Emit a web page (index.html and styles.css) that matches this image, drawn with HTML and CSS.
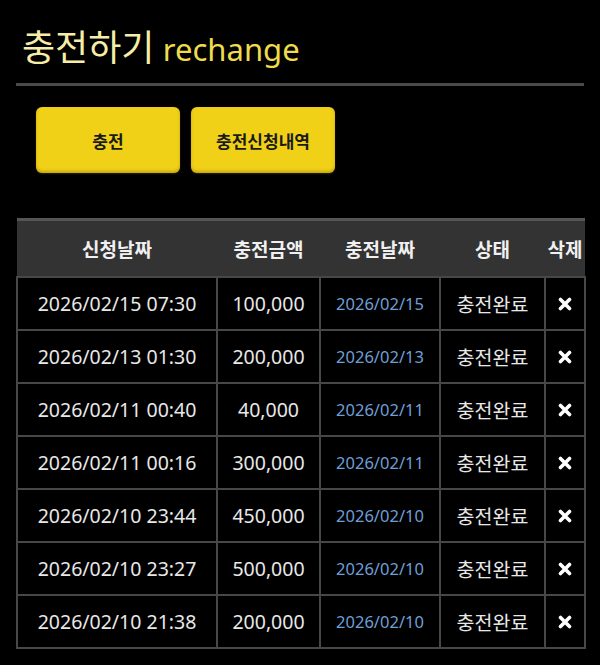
FILE: index.html
```html
<!DOCTYPE html>
<html lang="ko">
<head>
<meta charset="utf-8">
<title>충전하기</title>
<link rel="stylesheet" href="styles.css">
</head>
<body>
<div class="page">
  <h1 class="title"><span class="title-ko">충전하기</span> <span class="title-en">rechange</span></h1>
  <div class="rule"></div>
  <div class="actions">
    <button class="btn">충전</button>
    <button class="btn">충전신청내역</button>
  </div>
  <table class="list">
    <colgroup>
      <col class="c1"><col class="c2"><col class="c3"><col class="c4"><col class="c5">
    </colgroup>
    <thead>
      <tr><th>신청날짜</th><th>충전금액</th><th>충전날짜</th><th>상태</th><th>삭제</th></tr>
    </thead>
    <tbody>
      <tr><td>2026/02/15 07:30</td><td>100,000</td><td class="date">2026/02/15</td><td>충전완료</td><td class="del"><svg class="x" viewBox="0 0 14 14"><path d="M2.5 2.5 L11.5 11.5 M11.5 2.5 L2.5 11.5"/></svg></td></tr>
      <tr><td>2026/02/13 01:30</td><td>200,000</td><td class="date">2026/02/13</td><td>충전완료</td><td class="del"><svg class="x" viewBox="0 0 14 14"><path d="M2.5 2.5 L11.5 11.5 M11.5 2.5 L2.5 11.5"/></svg></td></tr>
      <tr><td>2026/02/11 00:40</td><td>40,000</td><td class="date">2026/02/11</td><td>충전완료</td><td class="del"><svg class="x" viewBox="0 0 14 14"><path d="M2.5 2.5 L11.5 11.5 M11.5 2.5 L2.5 11.5"/></svg></td></tr>
      <tr><td>2026/02/11 00:16</td><td>300,000</td><td class="date">2026/02/11</td><td>충전완료</td><td class="del"><svg class="x" viewBox="0 0 14 14"><path d="M2.5 2.5 L11.5 11.5 M11.5 2.5 L2.5 11.5"/></svg></td></tr>
      <tr><td>2026/02/10 23:44</td><td>450,000</td><td class="date">2026/02/10</td><td>충전완료</td><td class="del"><svg class="x" viewBox="0 0 14 14"><path d="M2.5 2.5 L11.5 11.5 M11.5 2.5 L2.5 11.5"/></svg></td></tr>
      <tr><td>2026/02/10 23:27</td><td>500,000</td><td class="date">2026/02/10</td><td>충전완료</td><td class="del"><svg class="x" viewBox="0 0 14 14"><path d="M2.5 2.5 L11.5 11.5 M11.5 2.5 L2.5 11.5"/></svg></td></tr>
      <tr><td>2026/02/10 21:38</td><td>200,000</td><td class="date">2026/02/10</td><td>충전완료</td><td class="del"><svg class="x" viewBox="0 0 14 14"><path d="M2.5 2.5 L11.5 11.5 M11.5 2.5 L2.5 11.5"/></svg></td></tr>
    </tbody>
  </table>
</div>
</body>
</html>
```

FILE: styles.css
```css
html, body {
  margin: 0;
  padding: 0;
  background: #000;
}
body {
  font-family: "Noto Sans", "Noto Sans CJK KR", sans-serif;
  color: #e6e6e6;
  width: 600px;
  height: 665px;
  overflow: hidden;
}
.page {
  padding: 18px 16px 0 16px;
}
.title {
  margin: 0;
  padding-left: 6px;
  font-weight: normal;
  line-height: 54px;
  height: 54px;
  white-space: nowrap;
}
.title-ko {
  font-family: "Noto Sans CJK KR", sans-serif;
  font-size: 36px;
  color: #f6eea6;
}
.title-en {
  font-family: "Noto Sans", sans-serif;
  font-size: 31px;
  color: #eedb4e;
}
.rule {
  margin-top: 11px;
  height: 3px;
  background: #4a4a4a;
}
.actions {
  display: flex;
  gap: 11px;
  padding: 21px 0 0 20px;
  height: 66px;
}
.btn {
  width: 144px;
  height: 66px;
  border: none;
  border-radius: 6px;
  background: #f0d118;
  box-shadow: inset 0 -2px 3px rgba(120, 90, 0, 0.35), 0 1px 2px rgba(255, 230, 80, 0.15);
  font-family: "Noto Sans CJK KR", sans-serif;
  font-weight: bold;
  font-size: 17px;
  color: #1a1a1a;
  padding: 0;
}
.list {
  margin-top: 45px;
  width: 568px;
  table-layout: fixed;
  border-collapse: collapse;
}
.c1 { width: 200px; }
.c2 { width: 103px; }
.c3 { width: 120px; }
.c4 { width: 105px; }
.c5 { width: 40px; }
.list th {
  background: #333;
  border-top: 3px solid #555;
  height: 55px;
  padding: 0;
  font-family: "Noto Sans CJK KR", sans-serif;
  font-weight: bold;
  font-size: 19px;
  color: #f0f0f0;
  white-space: nowrap;
  overflow: hidden;
}
.list td {
  border: 2px solid #474747;
  height: 51px;
  padding: 0;
  text-align: center;
  font-size: 19.5px;
  color: #e8e8e8;
  white-space: nowrap;
}
.list td.date {
  font-size: 16.5px;
  color: #6e9fd6;
}
.list td.del {
  line-height: 0;
}
.x {
  width: 14px;
  height: 14px;
  fill: none;
  stroke: #fff;
  stroke-width: 3.6;
  stroke-linecap: round;
  vertical-align: middle;
}
```
